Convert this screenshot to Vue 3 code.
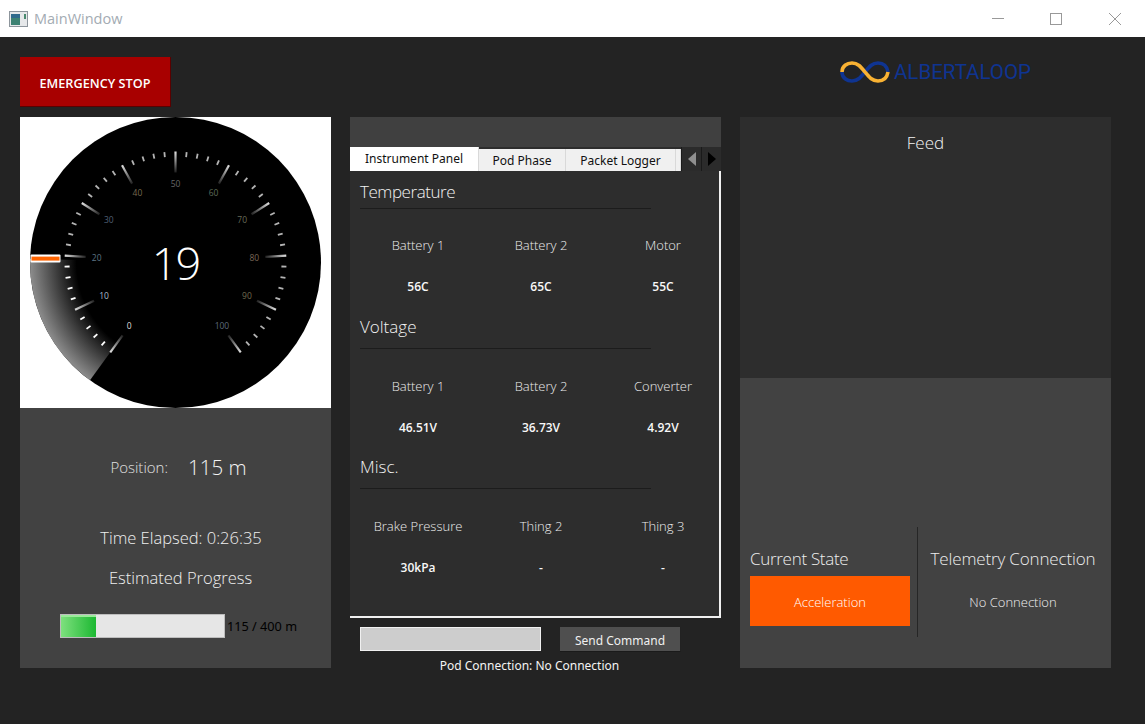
<script setup>
const cx = 145.5
const cy = 145.5

const polar = (value, r) => {
  const a = (-144 + value * 2.88) * Math.PI / 180
  return { x: cx + r * Math.sin(a), y: cy - r * Math.cos(a) }
}

const speed = 19
const labelColors = ['#dcdcdc', '#a9bccb', '#5d7484', '#4f5f74', '#75694f', '#666', '#5d6a58', '#676a58', '#7a6656', '#6f6a4e', '#5e6a7a']

const majors = []
const minors = []
for (let v = 0; v <= 100; v += 2) {
  const outer = polar(v, 111)
  if (v % 10 === 0) {
    const inner = polar(v, 90)
    majors.push({ v, x1: outer.x, y1: outer.y, x2: inner.x, y2: inner.y, label: polar(v, 79) })
  } else {
    const inner = polar(v, 106)
    minors.push({ v, x1: outer.x, y1: outer.y, x2: inner.x, y2: inner.y })
  }
}

const rimStart = polar(0, 145.5)
const rimEnd = polar(speed + 0.25, 145.5)
const wedge = `M${cx} ${cy} L${rimStart.x} ${rimStart.y} A145.5 145.5 0 0 1 ${rimEnd.x} ${rimEnd.y} Z`

const groups = [
  { title: 'Temperature', cls: 'temp', cells: [['Battery 1', '56C'], ['Battery 2', '65C'], ['Motor', '55C']] },
  { title: 'Voltage', cls: 'volt', cells: [['Battery 1', '46.51V'], ['Battery 2', '36.73V'], ['Converter', '4.92V']] },
  { title: 'Misc.', cls: 'misc', cells: [['Brake Pressure', '30kPa'], ['Thing 2', '-'], ['Thing 3', '-']] }
]
</script>

<template>
  <div class="window">
    <div class="titlebar">
      <svg class="appicon" width="19" height="16" viewBox="0 0 19 16">
        <rect x="0.5" y="0.5" width="18" height="15" fill="#e6e8ea" stroke="#8d959c" />
        <rect x="2" y="3" width="9" height="11" fill="#3d8273" />
        <rect x="2" y="3" width="9" height="4" fill="#2f6a8c" />
        <rect x="15" y="3" width="2" height="5" fill="#4a8a70" />
      </svg>
      <span class="wintitle">MainWindow</span>
      <div class="controls">
        <svg width="12" height="12" viewBox="0 0 12 12"><path d="M0 5.5H12" stroke="#999" fill="none" /></svg>
        <svg width="12" height="12" viewBox="0 0 12 12"><rect x="0.5" y="0.5" width="11" height="11" stroke="#999" fill="none" /></svg>
        <svg width="12" height="12" viewBox="0 0 12 12"><path d="M0 0L12 12M12 0L0 12" stroke="#999" fill="none" /></svg>
      </div>
    </div>

    <div class="main">
      <button class="estop">EMERGENCY STOP</button>
      <div></div>
      <div class="logo">
        <svg width="50" height="24" viewBox="0 0 50 24">
          <path d="M2 12C2 18 7 21 12 21C18 21 21 17 25 12C29 7 32 3 38 3C43 3 47 6 48 12" fill="none" stroke="#0f3491" stroke-width="3.6" />
          <path d="M2 12C2 6 7 3 12 3C18 3 21 7 25 12C29 17 32 21 38 21C43 21 47 18 48 12" fill="none" stroke="#f9b233" stroke-width="3.6" />
        </svg>
        <span>ALBERTALOOP</span>
      </div>

      <div class="leftcol">
        <div class="gaugebox">
          <svg width="291" height="291" viewBox="0 0 291 291">
            <defs>
              <radialGradient id="sweep" gradientUnits="userSpaceOnUse" :cx="cx" :cy="cy" r="145.5">
                <stop offset="0.68" stop-color="#000" />
                <stop offset="1" stop-color="#8c8c8c" />
              </radialGradient>
              <linearGradient v-for="m in majors" :key="m.v" :id="'tick' + m.v" gradientUnits="userSpaceOnUse" :x1="m.x1" :y1="m.y1" :x2="m.x2" :y2="m.y2">
                <stop offset="0" stop-color="#e0e0e0" />
                <stop offset="1" stop-color="#222" />
              </linearGradient>
              <filter id="soft" x="-10%" y="-60%" width="120%" height="220%">
                <feGaussianBlur stdDeviation="0.4" />
              </filter>
            </defs>
            <circle :cx="cx" :cy="cy" r="145.5" fill="#000" />
            <path :d="wedge" fill="url(#sweep)" />
            <line v-for="m in majors" :key="m.v" :x1="m.x1" :y1="m.y1" :x2="m.x2" :y2="m.y2" :stroke="'url(#tick' + m.v + ')'" stroke-width="2.2" />
            <line v-for="m in minors" :key="m.v" :x1="m.x1" :y1="m.y1" :x2="m.x2" :y2="m.y2" :stroke="m.v <= 20 ? '#fff' : '#b4b4b4'" stroke-width="1.8" />
            <text v-for="(m, i) in majors" :key="m.v" class="ticklabel" :x="m.label.x" :y="m.label.y + 3" :fill="labelColors[i]">{{ m.v }}</text>
            <rect x="0.5" y="137.6" width="30" height="8" rx="1" fill="#fff" filter="url(#soft)" />
            <rect x="1.5" y="139.6" width="28" height="4" fill="#ff6400" />
            <text class="speed" x="145.5" y="163">{{ speed }}</text>
          </svg>
        </div>
        <div class="infobox">
          <div class="position">
            <span class="poslabel">Position:</span>
            <span class="posvalue">115 m</span>
          </div>
          <div class="elapsed">Time Elapsed: 0:26:35</div>
          <div class="estimated">Estimated Progress</div>
          <div class="progressrow">
            <div class="track"><div class="fill"></div></div>
            <span class="progresstext">115 / 400 m</span>
          </div>
        </div>
      </div>

      <div class="midcol">
        <div class="tabarea">
          <div class="tabs">
            <div class="tab active">Instrument Panel</div>
            <div class="tab podphase">Pod Phase</div>
            <div class="tab logger">Packet Logger</div>
            <div class="tab sliver"></div>
            <div class="scroller">
              <div class="scrollbtn"><svg width="8" height="14" viewBox="0 0 8 14"><path d="M8 0V14L0 7Z" fill="#8f8f8f" /></svg></div>
              <div class="scrollbtn"><svg width="8" height="14" viewBox="0 0 8 14"><path d="M0 0V14L8 7Z" fill="#000" /></svg></div>
            </div>
          </div>
          <div class="pane">
            <section v-for="g in groups" :key="g.title" class="group" :class="g.cls">
              <h3>{{ g.title }}</h3>
              <div class="readings">
                <div v-for="c in g.cells" :key="c[0]" class="reading">
                  <span class="rlabel">{{ c[0] }}</span>
                  <b class="rvalue">{{ c[1] }}</b>
                </div>
              </div>
            </section>
          </div>
        </div>
        <div class="commandrow">
          <div class="cmdinput"></div>
          <button class="sendbtn">Send Command</button>
        </div>
        <div class="podconn">Pod Connection: No Connection</div>
      </div>

      <div class="rightcol">
        <div class="feed">Feed</div>
        <div class="status">
          <div class="statecol">
            <div class="statehead">Current State</div>
            <div class="statebox">Acceleration</div>
          </div>
          <div class="vline"></div>
          <div class="telcol">
            <div class="statehead">Telemetry Connection</div>
            <div class="telvalue">No Connection</div>
          </div>
        </div>
      </div>
    </div>
  </div>
</template>

<style>
html, body {
  margin: 0;
  background: #232323;
  overflow: hidden;
}
</style>

<style scoped>
.window {
  width: 1145px;
  height: 724px;
  display: flex;
  flex-direction: column;
  font-family: "Open Sans", "Noto Sans", sans-serif;
  font-weight: 300;
  color: #d8d8d8;
}

.titlebar {
  height: 37px;
  background: #fff;
  display: flex;
  align-items: center;
  padding-left: 9px;
  box-sizing: border-box;
}
.appicon {
  margin-right: 6px;
}
.wintitle {
  font-size: 14.5px;
  font-weight: 400;
  color: #a3abb3;
}
.controls {
  margin-left: auto;
  display: flex;
  gap: 47px;
  padding-right: 24px;
}
.controls svg:first-child {
  margin-right: -1px;
}

.main {
  display: grid;
  grid-template-columns: 311px 371px 371px;
  grid-template-rows: 50px 551px;
  column-gap: 19px;
  row-gap: 10px;
  padding: 20px 20px 0;
}

.estop {
  width: 151px;
  height: 50px;
  background: #a80000;
  border: none;
  border-right: 1px solid #5a0000;
  border-bottom: 1px solid #5a0000;
  color: #fff;
  font-family: "Open Sans", sans-serif;
  font-weight: 600;
  font-size: 12.7px;
  padding: 2px 0 0;
}

.logo {
  display: flex;
  align-items: flex-start;
  gap: 4px;
  padding: 3px 0 0 100px;
  color: #0f3491;
  font-family: Roboto, sans-serif;
  font-weight: 400;
  font-size: 20.5px;
  line-height: 24px;
}

.leftcol {
  display: flex;
  flex-direction: column;
}
.gaugebox {
  height: 291px;
  background: #fff;
  display: flex;
  justify-content: center;
}
.ticklabel {
  font-family: "Open Sans", sans-serif;
  font-size: 8.5px;
  font-weight: 400;
  text-anchor: middle;
}
.speed {
  font-family: "Open Sans", sans-serif;
  font-weight: 300;
  font-size: 45px;
  letter-spacing: -2px;
  fill: #fff;
  text-anchor: middle;
}
.infobox {
  flex: 1;
  background: #424242;
  display: flex;
  flex-direction: column;
  align-items: center;
}
.position {
  display: flex;
  align-items: center;
  gap: 20px;
  height: 30px;
  margin-top: 44px;
  padding-left: 6px;
}
.poslabel {
  font-size: 15px;
  color: #e0e0e0;
}
.posvalue {
  font-size: 20.5px;
  color: #f4f4f4;
}
.elapsed {
  margin-top: 41px;
  height: 30px;
  line-height: 30px;
  font-size: 16.5px;
  color: #f0f0f0;
  padding-left: 11px;
}
.estimated {
  margin-top: 10px;
  height: 30px;
  line-height: 30px;
  font-size: 16.5px;
  color: #f0f0f0;
  padding-left: 10px;
}
.progressrow {
  align-self: flex-start;
  display: flex;
  align-items: center;
  gap: 2px;
  margin: 21px 0 0 40px;
}
.track {
  width: 165px;
  height: 24px;
  box-sizing: border-box;
  border: 1px solid #bdbdbd;
  background: #e6e6e6;
}
.fill {
  width: 35px;
  height: 100%;
  background: linear-gradient(90deg, #7ee07e, #1cb832);
  box-shadow: inset 0 2px 0 #9aea9a;
}
.progresstext {
  font-family: "Noto Sans", sans-serif;
  font-weight: 400;
  font-size: 12.7px;
  color: #000;
}

.midcol {
  display: flex;
  flex-direction: column;
}
.tabarea {
  flex: none;
  height: 501px;
  background: #404040;
  padding-top: 30px;
  box-sizing: border-box;
  display: flex;
  flex-direction: column;
}
.tabs {
  display: flex;
  height: 24px;
  align-items: flex-end;
  font-family: "Noto Sans", sans-serif;
  font-weight: 400;
  font-size: 12px;
  color: #111;
  background: #2d2d2d;
}
.tab {
  height: 22px;
  line-height: 23px;
  text-align: center;
  background: #f0f0f0;
  border-right: 1px solid #d9d9d9;
  box-sizing: border-box;
}
.tab.active {
  height: 24px;
  line-height: 24px;
  width: 129px;
  background: #fff;
}
.tab.podphase {
  width: 87px;
}
.tab.logger {
  width: 110px;
}
.tab.sliver {
  width: 5px;
}
.scroller {
  flex: 1;
  display: flex;
  height: 24px;
  background: #2b2b2b;
}
.scrollbtn {
  width: 20px;
  display: flex;
  align-items: center;
  justify-content: center;
  border-left: 1px solid #1a1a1a;
  box-sizing: border-box;
}
.pane {
  flex: 1;
  background: #2d2d2d;
  border-right: 2px solid #f0f0f0;
  border-bottom: 2px solid #f0f0f0;
  padding: 8px 0 0 10px;
  box-sizing: border-box;
}
.group h3 {
  margin: 0;
  width: 291px;
  height: 29px;
  font-weight: 300;
  font-size: 17px;
  line-height: 26px;
  color: #f2f2f2;
  border-bottom: 1px solid #1c1c1c;
}
.group.temp h3 {
  letter-spacing: -0.45px;
}
.group.volt h3, .group.misc h3 {
  height: 34px;
}
.group.temp {
  margin-bottom: 6px;
}
.group.volt {
  margin-bottom: 6px;
}
.readings {
  display: grid;
  grid-template-columns: 116px 130px 114px;
  padding-top: 16px;
}
.group.temp .readings {
  padding-top: 15px;
}
.reading {
  display: flex;
  flex-direction: column;
  align-items: center;
}
.rlabel {
  height: 42px;
  line-height: 42px;
  font-size: 13px;
  color: #ececec;
}
.rvalue {
  height: 41px;
  line-height: 41px;
  font-size: 12px;
  font-weight: 600;
  color: #f8f8f8;
}
.group.temp .rvalue {
  height: 42px;
  line-height: 42px;
}

.commandrow {
  display: flex;
  align-items: flex-start;
  padding: 9px 0 0 10px;
  gap: 19px;
}
.cmdinput {
  width: 181px;
  height: 24px;
  box-sizing: border-box;
  border: 1px solid #f0f0f0;
  background: #cdcdcd;
}
.sendbtn {
  width: 121px;
  height: 25px;
  padding: 2px 0 0;
  background: #4f4f4f;
  border: none;
  border-right: 1px solid #222;
  border-bottom: 1px solid #1a1a1a;
  color: #f0f0f0;
  font-family: "Noto Sans", sans-serif;
  font-size: 12px;
}
.podconn {
  font-family: "Noto Sans", sans-serif;
  font-weight: 400;
  font-size: 12px;
  color: #f4f4f4;
  text-align: center;
  padding: 5px 12px 0 0;
}

.rightcol {
  display: flex;
  flex-direction: column;
}
.feed {
  height: 261px;
  background: #2d2d2d;
  text-align: center;
  padding: 12px 0 0 0;
  box-sizing: border-box;
  font-size: 17px;
  line-height: 28px;
  color: #f2f2f2;
}
.status {
  flex: 1;
  background: #424242;
  display: flex;
  padding: 149px 15px 0 10px;
  align-items: flex-start;
}
.statecol {
  flex: none;
  width: 160px;
}
.statehead {
  height: 49px;
  padding-top: 19px;
  box-sizing: border-box;
  line-height: 26px;
  font-size: 17px;
  letter-spacing: -0.15px;
  color: #eeeeee;
  white-space: nowrap;
}
.statecol .statehead {
  letter-spacing: -0.3px;
}
.statebox {
  height: 50px;
  line-height: 52px;
  background: #ff5a00;
  text-align: center;
  font-size: 13px;
  color: #fff;
}
.vline {
  flex: none;
  width: 1px;
  height: 110px;
  margin: 0 12px 0 7px;
  background: #262626;
}
.telcol {
  flex: 1;
  text-align: center;
}
.telvalue {
  height: 50px;
  line-height: 52px;
  font-size: 13px;
  color: #f0f0f0;
}
</style>
